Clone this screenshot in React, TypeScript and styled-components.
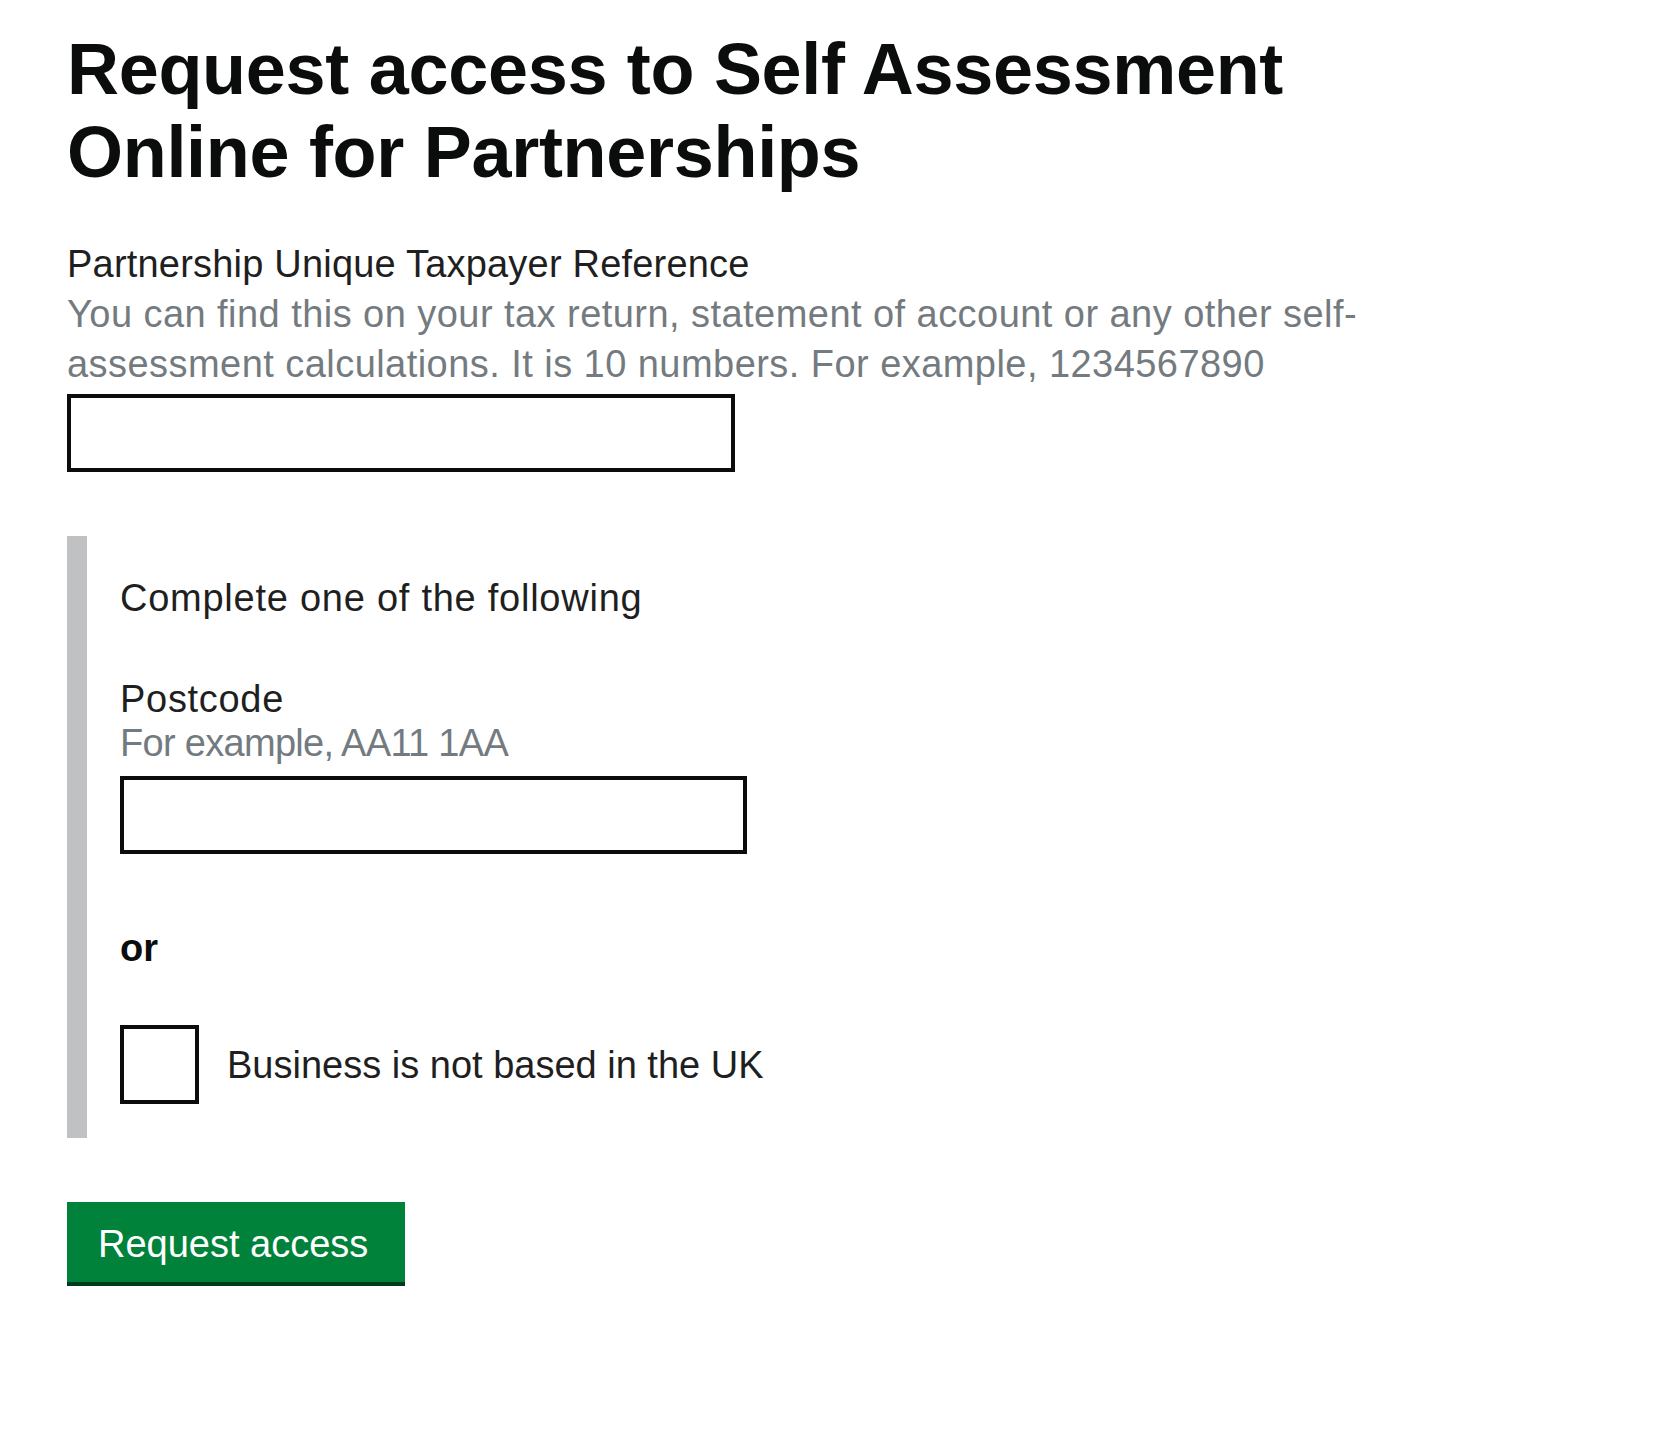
import React from "react";
import styled, { createGlobalStyle } from "styled-components";

const GlobalStyle = createGlobalStyle`
  html, body {
    margin: 0;
    padding: 0;
    background: #ffffff;
  }
  body {
    font-family: "Liberation Sans", Arial, sans-serif;
    color: #0b0c0c;
  }
  * { box-sizing: border-box; }
`;

const Page = styled.main`
  padding: 28px 67px 60px;
`;

const Heading = styled.h1`
  margin: 0 0 45px;
  max-width: 1300px;
  font-size: 72px;
  line-height: 83px;
  font-weight: 700;
  letter-spacing: -0.3px;
  color: #0b0c0c;
`;

const FormGroup = styled.div`
  display: flex;
  flex-direction: column;
  align-items: flex-start;
`;

const Label = styled.label<{ $tight?: boolean }>`
  display: block;
  font-size: 38px;
  line-height: ${(p) => (p.$tight ? "44px" : "50px")};
  letter-spacing: ${(p) => (p.$tight ? "0.7px" : "0.2px")};
  color: #1f1f1f;
`;

const Hint = styled.div<{ $tight?: boolean; $gap: number }>`
  max-width: 1300px;
  font-size: 38px;
  line-height: ${(p) => (p.$tight ? "44px" : "50px")};
  letter-spacing: ${(p) => (p.$tight ? "-0.7px" : "0.45px")};
  color: #747b80;
  margin-bottom: ${(p) => p.$gap}px;
`;

const TextInput = styled.input<{ $width: number }>`
  display: block;
  width: ${(p) => p.$width}px;
  height: 78px;
  margin: 0;
  padding: 0 10px;
  border: 4px solid #0b0c0c;
  border-radius: 0;
  background: #ffffff;
  font: inherit;
  font-size: 38px;
  outline: none;
`;

const Inset = styled.div`
  margin-top: 64px;
  padding: 37px 0 34px 33px;
  border-left: 20px solid #bfc1c3;
`;

const InsetLead = styled.p`
  margin: 0 0 54px;
  font-size: 38px;
  line-height: 50px;
  letter-spacing: 0.75px;
  color: #1f1f1f;
`;

const OrText = styled.p`
  margin: 69px 0 52px;
  font-size: 38px;
  line-height: 50px;
  font-weight: 700;
  color: #0b0c0c;
`;

const CheckboxRow = styled.label`
  display: flex;
  align-items: center;
  gap: 28px;
  cursor: pointer;
`;

const CheckBox = styled.span`
  display: block;
  width: 79px;
  height: 79px;
  border: 4px solid #0b0c0c;
  background: #ffffff;
  flex: none;
`;

const CheckLabel = styled.span`
  font-size: 38px;
  line-height: 50px;
  color: #1f1f1f;
`;

const Button = styled.button`
  display: inline-block;
  margin-top: 64px;
  padding: 23px 37px 19px 31px;
  border: 0;
  border-radius: 0;
  background: #00823b;
  box-shadow: 0 4px 0 #003a1c;
  color: #ffffff;
  font: inherit;
  font-size: 38px;
  line-height: 38px;
  cursor: pointer;
`;

export default function App() {
  return (
    <>
      <GlobalStyle />
      <Page>
        <Heading>Request access to Self Assessment Online for Partnerships</Heading>

        <FormGroup>
          <Label htmlFor="utr">Partnership Unique Taxpayer Reference</Label>
          <Hint $gap={5}>
            You can find this on your tax return, statement of account or any other self-assessment
            calculations. It is 10 numbers. For example, 1234567890
          </Hint>
          <TextInput id="utr" type="text" $width={668} />
        </FormGroup>

        <Inset>
          <InsetLead>Complete one of the following</InsetLead>
          <FormGroup>
            <Label htmlFor="postcode" $tight>
              Postcode
            </Label>
            <Hint $tight $gap={11}>
              For example, AA11 1AA
            </Hint>
            <TextInput id="postcode" type="text" $width={627} />
          </FormGroup>
          <OrText>or</OrText>
          <CheckboxRow>
            <CheckBox />
            <CheckLabel>Business is not based in the UK</CheckLabel>
          </CheckboxRow>
        </Inset>

        <Button type="button">Request access</Button>
      </Page>
    </>
  );
}
